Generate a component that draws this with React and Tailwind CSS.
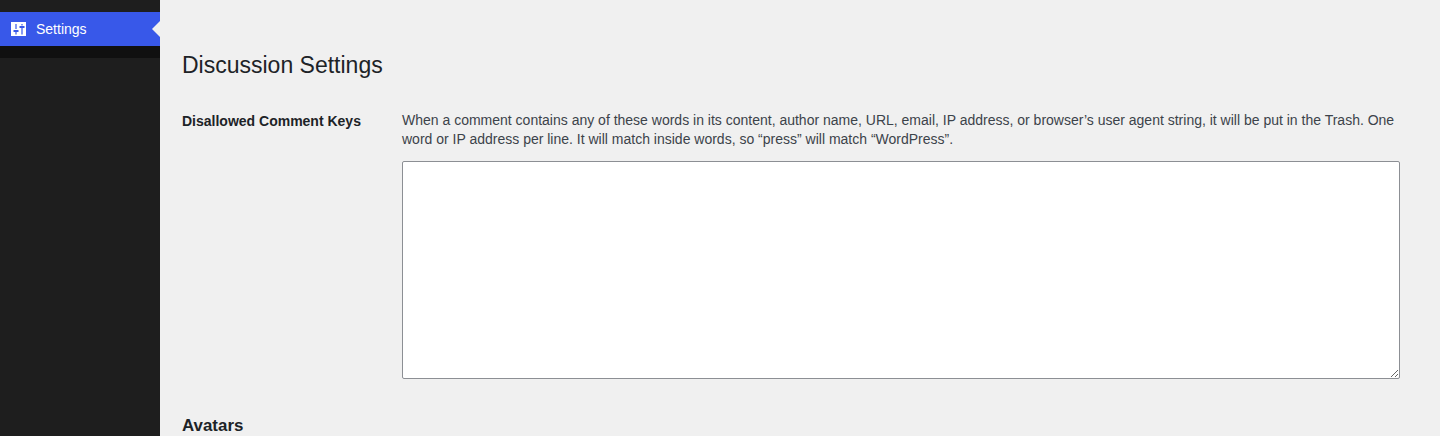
import React from 'react'

function SettingsIcon() {
  return (
    <svg width="16" height="16" viewBox="0 0 16 16" className="shrink-0">
      <rect x="1" y="1" width="15" height="14" fill="#fff" />
      <path d="M6 3v5M6 11v2.5" stroke="#3858e9" strokeWidth="1.2" fill="none" />
      <rect x="3.5" y="9" width="5" height="2" fill="#3858e9" />
      <path d="M12 3v1.5M12 7v6.5" stroke="#3858e9" strokeWidth="1.2" fill="none" />
      <rect x="9.5" y="5" width="5" height="2" fill="#3858e9" />
    </svg>
  )
}

export default function App() {
  return (
    <div className="flex h-[436px] overflow-hidden bg-[#f0f0f0] font-['Liberation_Sans',Arial,sans-serif] text-[#3c434a]">
      <aside className="w-[160px] shrink-0 bg-[#1e1e1e]">
        <div className="h-3" />
        <div className="relative flex h-[34px] items-center gap-[10px] bg-[#3858e9] pl-[10px] text-[14px] text-white">
          <SettingsIcon />
          <span>Settings</span>
          <div className="absolute right-0 top-[9px] h-0 w-0 border-y-[8px] border-r-[8px] border-y-transparent border-r-[#f0f0f0]" />
        </div>
        <div className="h-3 bg-[#101010]" />
      </aside>

      <main className="min-w-0 flex-1 pl-[22px] pr-10">
        <h1 className="mt-[51px] text-[23px] leading-[29px] text-[#1d2327]">Discussion Settings</h1>

        <div className="mt-[31px] flex">
          <div className="w-[220px] shrink-0 text-[14px] font-bold leading-[20px] text-[#1d2327]">
            Disallowed Comment Keys
          </div>
          <div className="min-w-0 flex-1">
            <p className="-mt-[0.5px] text-[14px] leading-[19.6px] text-[#3c434a]">
              When a comment contains any of these words in its content, author name, URL, email, IP address, or browser’s user agent string, it will be put in the Trash. One word or IP address per line. It will match inside words, so “press” will match “WordPress”.
            </p>
            <textarea className="mt-[11.5px] block h-[218px] w-full rounded-[2px] border border-[#8c8f94] bg-white" />
          </div>
        </div>

        <h2 className="mt-[37px] text-[16.9px] font-bold leading-[20px] text-[#1d2327]">Avatars</h2>
      </main>
    </div>
  )
}
